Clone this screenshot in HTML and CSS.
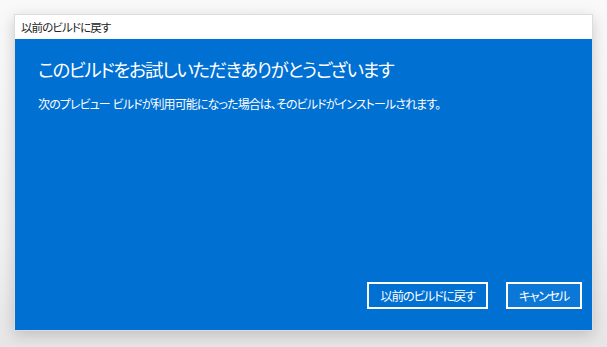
FILE: index.html
```html
<!DOCTYPE html>
<html lang="ja">
<head>
<meta charset="utf-8">
<link rel="stylesheet" href="styles.css">
</head>
<body>
<div class="window">
  <div class="titlebar">以前のビルドに戻す</div>
  <div class="content">
    <h1 class="heading">このビルドをお試しいただきありがとうございます</h1>
    <p class="desc">次のプレビュー ビルドが利用可能になった場合は、そのビルドがインストールされます。</p>
    <div class="actions">
      <button class="btn btn-primary">以前のビルドに戻す</button>
      <button class="btn btn-cancel">キャンセル</button>
    </div>
  </div>
</div>
</body>
</html>
```
FILE: styles.css
```css
html, body {
  margin: 0;
  padding: 0;
}
body {
  width: 607px;
  height: 347px;
  background: linear-gradient(#f9f9f9, #f1f1f1 70%, #e6e6e6);
  font-family: "Noto Sans CJK JP", sans-serif;
  font-feature-settings: "palt";
  padding: 14px 14px 16px 14px;
  box-sizing: border-box;
  overflow: hidden;
}
.window {
  width: 579px;
  height: 317px;
  display: flex;
  flex-direction: column;
  border: 1px solid #dcdcdc;
  box-sizing: border-box;
  box-shadow: 0 4px 14px rgba(0, 0, 0, 0.18);
  background: #fff;
}
.titlebar {
  height: 24px;
  display: flex;
  align-items: center;
  padding-left: 6px;
  font-size: 11.5px;
  letter-spacing: -0.9px;
  color: #222;
  background: #fff;
}
.content {
  flex: 1;
  background: #0070d3;
  color: #fff;
  display: flex;
  flex-direction: column;
  padding: 16px 10px 21px 23px;
}
.heading {
  margin: 0;
  font-size: 18.5px;
  letter-spacing: -1.5px;
  font-weight: 400;
  line-height: 28px;
}
.desc {
  margin: 12px 0 0;
  font-size: 12px;
  letter-spacing: -0.9px;
  word-spacing: 1px;
  line-height: 18px;
}
.actions {
  margin-top: auto;
  display: flex;
  justify-content: flex-end;
  gap: 18px;
}
.btn {
  font-family: inherit;
  font-feature-settings: "palt";
  font-size: 12.5px;
  letter-spacing: -1.3px;
  color: #fff;
  height: 27px;
  border: 2px solid #fff;
  background: #0070d3;
  padding: 0;
}
.btn-primary {
  width: 121px;
}
.btn-cancel {
  width: 76px;
  background: #0b78d8;
}
```
